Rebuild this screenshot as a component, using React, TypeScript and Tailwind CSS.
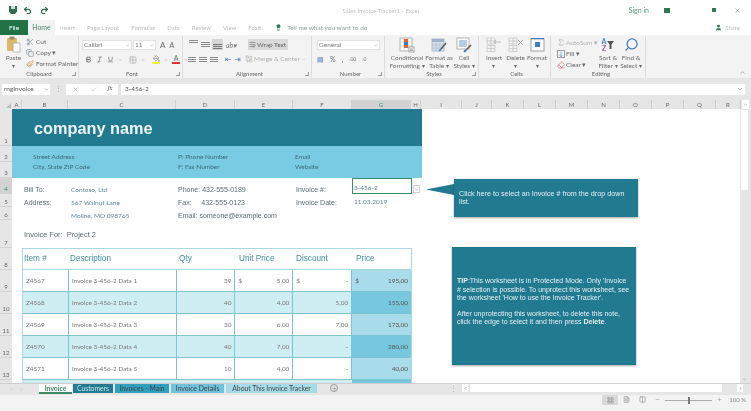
import { ChevronDown, ChevronUp, Undo2, Redo2, Search, Scissors, Copy, Paintbrush, Bold, Italic, Underline, Grid2x2, PaintBucket, Sigma, Eraser, X, Check, Plus, Minus, Lightbulb, User, ChevronLeft, ChevronRight, LayoutGrid, FileText, Columns2, WrapText, Combine } from "lucide-react";

const colLetters = [
  ["A", "w-[10px]"], ["B", "w-[46px]"], ["C", "w-[108px]"], ["D", "w-[59px]"], ["E", "w-[58px]"], ["F", "w-[59px]"], ["G", "w-[59px]"], ["H", "w-[10px]"],
  ["I", "w-[41px]"], ["J", "w-[30px]"], ["K", "w-[32px]"], ["L", "w-[32px]"], ["M", "w-[32px]"], ["N", "w-[32px]"], ["O", "w-[32px]"], ["P", "w-[32px]"], ["Q", "w-[32px]"], ["R", "w-[25px]"],
];

const rowLabels = [
  ["1", "h-[37px]"], ["2", "h-[16px]"], ["3", "h-[16px]"], ["4", "h-[16px]"], ["5", "h-[13px]"], ["6", "h-[13px]"], ["7", "h-[28px]"], ["8", "h-[22px]"],
  ["9", "h-[22px]"], ["10", "h-[22px]"], ["11", "h-[22px]"], ["12", "h-[22px]"], ["13", "h-[22px]"],
];

const items = [
  { id: "Z4567", n: 1, qty: "39", unit: "5,00", disc: "-", price: "195,00", sign: true, band: false },
  { id: "Z4568", n: 2, qty: "40", unit: "4,00", disc: "5,00", price: "155,00", sign: false, band: true },
  { id: "Z4569", n: 3, qty: "30", unit: "6,00", disc: "7,00", price: "173,00", sign: false, band: false },
  { id: "Z4570", n: 4, qty: "40", unit: "7,00", disc: "-", price: "280,00", sign: false, band: true },
  { id: "Z4571", n: 5, qty: "10", unit: "4,00", disc: "-", price: "40,00", sign: false, band: false },
];

function Group({ label, className, launcher = true, children }: { label: string; className: string; launcher?: boolean; children: React.ReactNode }) {
  return (
    <div className={`relative flex h-full shrink-0 flex-col border-r border-[#dcdcdc] ${className}`}>
      <div className="flex min-h-0 flex-1 items-start">{children}</div>
      <div className="pb-[1px] text-center text-[6px] leading-[7px] text-[#666]">{label}</div>
      {launcher ? <div className="absolute bottom-[2px] right-[2px] h-[4px] w-[4px] border-b border-r border-[#999]" /> : null}
    </div>
  );
}

function BigButton({ lines, icon, className = "" }: { lines: string[]; icon: React.ReactNode; className?: string }) {
  return (
    <div className={`flex shrink-0 flex-col items-center whitespace-nowrap text-center text-[6.4px] leading-[8px] text-[#6a6a6a] ${className}`}>
      <div className="flex h-[17px] items-center">{icon}</div>
      <div className="mt-[1px]">{lines.map((l) => <div key={l}>{l}</div>)}</div>
    </div>
  );
}

function ConditionalIcon() {
  return (
    <svg width="16" height="16" viewBox="0 0 16 16" fill="none">
      <rect x="1" y="1" width="12" height="13" fill="#fff" stroke="#a0a0a0" strokeWidth="0.8" />
      <path d="M1 5h12M1 9h12M5 1v13M9 1v13" stroke="#c0c0c0" strokeWidth="0.6" />
      <rect x="5" y="2" width="4" height="3" fill="#e0662f" />
      <rect x="5" y="5" width="4" height="3" fill="#3f7cc0" />
      <rect x="5" y="8" width="4" height="3" fill="#e0662f" />
      <rect x="10" y="10" width="5" height="5" fill="#fff" stroke="#888" strokeWidth="0.7" />
      <path d="M11 12h3M11 13.5h3" stroke="#666" strokeWidth="0.6" />
    </svg>
  );
}

function FormatTableIcon() {
  return (
    <svg width="16" height="16" viewBox="0 0 16 16" fill="none">
      <rect x="1" y="2" width="12" height="12" fill="#d5e0ec" stroke="#a6b2c0" strokeWidth="0.8" />
      <rect x="1" y="2" width="12" height="3" fill="#9fb2c8" />
      <path d="M1 8h12M1 11h12M5 2v12M9 2v12" stroke="#a9b6c6" strokeWidth="0.6" />
      <path d="M15 6l-5 6" stroke="#555" strokeWidth="1.4" />
      <path d="M10 12l-2 2" stroke="#3f7cc0" strokeWidth="1.6" />
    </svg>
  );
}

function CellStylesIcon() {
  return (
    <svg width="16" height="16" viewBox="0 0 16 16" fill="none">
      <rect x="1" y="1" width="12" height="11" fill="#fff" stroke="#a0a0a0" strokeWidth="0.8" />
      <rect x="3" y="3" width="8" height="7" fill="#b7cde2" />
      <path d="M15 8l-4 4" stroke="#555" strokeWidth="1.4" />
      <path d="M11 12l-3 3" stroke="#3f7cc0" strokeWidth="1.8" />
    </svg>
  );
}

function CellsIcon({ mark }: { mark: React.ReactNode }) {
  return (
    <svg width="16" height="15" viewBox="0 0 16 15" fill="none">
      <path d="M1 8.5h8v6H1zM1 11.5h8M5 8.5v6M1 1h8v6H1zM1 4h8M5 1v6" stroke="#c2c2c2" strokeWidth="0.7" />
      {mark}
    </svg>
  );
}

function Ribbon() {
  return (
    <div className="flex h-[43px] shrink-0 bg-[#f3f3f3] pt-[1px]">
      <Group label="Clipboard" className="w-[79px]">
        <BigButton
          className="ml-[5px] w-[17px]"
          lines={["Paste", "▾"]}
          icon={
            <svg width="15" height="17" viewBox="0 0 15 17" fill="none">
              <rect x="1" y="2" width="10" height="13" rx="1" fill="#e0b866" />
              <rect x="3.5" y="0.5" width="5" height="3" fill="#9a8a70" />
              <path d="M7 7h7v9H7z" fill="#fff" stroke="#a0a0a0" strokeWidth="0.7" />
            </svg>
          }
        />
        <div className="ml-[4px] flex flex-col gap-[2px] whitespace-nowrap pt-[1px] text-[6.5px] leading-[9px] text-[#666]">
          <div className="flex items-center gap-[2px]"><Scissors size={8} className="text-[#7d8794]" />Cut</div>
          <div className="flex items-center gap-[2px]"><Copy size={8} className="text-[#7d8794]" />Copy ▾</div>
          <div className="flex items-center gap-[2px]"><Paintbrush size={8} className="text-[#c9913d]" />Format Painter</div>
        </div>
      </Group>
      <Group label="Font" className="w-[104px] pl-[3px]">
        <div className="flex flex-col gap-[5px] pt-[4px]">
          <div className="flex items-center gap-[1px]">
            <div className="flex h-[10px] w-[50px] items-center justify-between border border-[#e2e2e2] bg-white px-[1px] text-[6.5px] text-[#777]">Calibri<ChevronDown size={5} /></div>
            <div className="flex h-[10px] w-[23px] items-center justify-between border border-[#e2e2e2] bg-white px-[1px] text-[6.5px] text-[#777]">11<ChevronDown size={5} /></div>
            <span className="ml-[3px] text-[8px] leading-[8px] text-[#666]">A</span>
            <span className="ml-[3px] text-[7px] leading-[8px] text-[#666]">A</span>
          </div>
          <div className="flex items-center gap-[4px] pl-[3px] text-[#666]">
            <Bold size={7} strokeWidth={3} />
            <Italic size={7} />
            <Underline size={7} />
            <ChevronDown size={4} />
            <Grid2x2 size={8} className="ml-[3px] text-[#aaa]" />
            <ChevronDown size={4} />
            <div className="ml-[3px] flex flex-col items-center">
              <PaintBucket size={7} className="text-[#888]" />
              <div className="h-[2px] w-[8px] bg-[#f5ee3a]" />
            </div>
            <ChevronDown size={4} />
            <div className="flex flex-col items-center">
              <span className="text-[7px] leading-[7px] text-[#666]">A</span>
              <div className="h-[2px] w-[8px] bg-[#e03030]" />
            </div>
            <ChevronDown size={4} />
          </div>
        </div>
      </Group>
      <Group label="Alignment" className="w-[129px] pl-[5px]">
        <div className="flex flex-col gap-[5px] pt-[3px]">
          <div className="flex items-center">
            <div className="flex w-[35px] items-center gap-[1px]">
              <div className="flex h-[11px] w-[11px] flex-col gap-[1px] p-[1px]"><div className="h-px bg-[#8a8a8a]" /><div className="h-px bg-[#8a8a8a]" /></div>
              <div className="flex h-[11px] w-[11px] flex-col justify-center gap-[1px] p-[1px]"><div className="h-px bg-[#8a8a8a]" /><div className="h-px bg-[#8a8a8a]" /><div className="h-px bg-[#8a8a8a]" /></div>
              <div className="flex h-[11px] w-[11px] flex-col justify-end gap-[1px] bg-[#d6d6d6] p-[1px]"><div className="h-px bg-[#777]" /><div className="h-px bg-[#777]" /><div className="h-px bg-[#777]" /></div>
            </div>
            <span className="ml-[3px] w-[15px] text-[7px] italic leading-[8px] text-[#777]">ab▾</span>
            <div className="ml-[7px] flex h-[11px] w-[40px] items-center gap-[1px] whitespace-nowrap bg-[#d9d9d9] px-[1px] text-[6.5px] text-[#666]"><WrapText size={7} />Wrap Text</div>
          </div>
          <div className="flex items-center">
            <div className="flex w-[35px] items-center gap-[3px]">
              {[0, 1, 2].map((k) => (
                <div key={k} className="flex h-[8px] w-[8px] flex-col justify-center gap-[1px]"><div className="h-px bg-[#8a8a8a]" /><div className="h-px bg-[#8a8a8a]" /><div className="h-px bg-[#8a8a8a]" /></div>
              ))}
            </div>
            <span className="flex gap-[2px] pl-[2px] text-[8px] leading-[8px] text-[#4f81bd]"><span>⇤</span><span>⇥</span></span>
            <div className="ml-[4px] flex items-center gap-[1px] whitespace-nowrap text-[6.5px] leading-[8px] text-[#b0b0b0]"><Combine size={8} />Merge &amp; Center <ChevronDown size={5} /></div>
          </div>
        </div>
      </Group>
      <Group label="Number" className="w-[73px] pl-[5px]">
        <div className="flex flex-col gap-[5px] pt-[4px]">
          <div className="flex h-[10px] w-[63px] items-center justify-between border border-[#e2e2e2] bg-white px-[1px] text-[6.5px] text-[#777]">General<ChevronDown size={5} /></div>
          <div className="flex items-center gap-[6px] text-[7px] leading-[8px] text-[#777]">
            <span className="text-[#4f81bd]">▤</span>
            <span>%</span>
            <span>,</span>
            <span className="text-[5px]">.00</span>
            <span className="text-[5px]">.0</span>
          </div>
        </div>
      </Group>
      <Group label="Styles" className="w-[94px] pl-[5px]">
        <BigButton className="w-[34px]" lines={["Conditional", "Formatting ▾"]} icon={<ConditionalIcon />} />
        <BigButton className="w-[30px]" lines={["Format as", "Table ▾"]} icon={<FormatTableIcon />} />
        <BigButton className="w-[20px]" lines={["Cell", "Styles ▾"]} icon={<CellStylesIcon />} />
      </Group>
      <Group label="Cells" className="w-[72px] pl-[4px]" launcher={false}>
        <BigButton className="w-[22px]" lines={["Insert", "▾"]} icon={<CellsIcon mark={<path d="M15 5H8M10 3L8 5l2 2" stroke="#b5b5b5" strokeWidth="0.9" />} />} />
        <BigButton className="w-[21px]" lines={["Delete", "▾"]} icon={<CellsIcon mark={<path d="M10 3l5 5M15 3l-5 5" stroke="#9a9a9a" strokeWidth="0.9" />} />} />
        <BigButton
          className="w-[22px]"
          lines={["Format", "▾"]}
          icon={
            <svg width="15" height="15" viewBox="0 0 15 15" fill="none">
              <rect x="1" y="2" width="13" height="12" fill="#fff" stroke="#a0a0a0" />
              <rect x="5" y="5" width="5" height="5" fill="#3f7cc0" />
              <path d="M1 1.5h13" stroke="#3f7cc0" />
            </svg>
          }
        />
      </Group>
      <Group label="Editing" className="w-[95px] pl-[6px]" launcher={false}>
        <div className="flex w-[41px] shrink-0 flex-col gap-[2px] whitespace-nowrap pt-[2px] text-[6.5px] leading-[9px]">
          <div className="flex items-center gap-[1px] text-[#b0b0b0]"><Sigma size={9} />AutoSum ▾</div>
          <div className="flex items-center gap-[1px] text-[#666]"><span className="flex h-[8px] w-[8px] items-center justify-center border border-[#9a9a9a] text-[6px] text-[#3f7cc0]">↓</span>Fill ▾</div>
          <div className="flex items-center gap-[1px] text-[#666]"><Eraser size={8} className="text-[#d9607a]" />Clear ▾</div>
        </div>
        <BigButton
          className="w-[20px]"
          lines={["Sort &", "Filter ▾"]}
          icon={
            <div className="flex items-center gap-[1px]">
              <span className="text-[7px] font-bold leading-[7px] text-[#3f7cc0]">A<br /><span className="text-[#8a5bc0]">Z</span></span>
              <svg width="7" height="8" viewBox="0 0 7 8"><path d="M0 0h7L4.5 3.5V8h-2V3.5z" fill="#555" /></svg>
            </div>
          }
        />
        <BigButton className="ml-[2px] w-[22px]" lines={["Find &", "Select ▾"]} icon={<Search size={15} className="-scale-x-100 text-[#3f7cc0]" />} />
      </Group>
      <div className="flex flex-1 items-end justify-end pb-[2px] pr-[5px] text-[#888]"><ChevronUp size={7} /></div>
    </div>
  );
}

function FormulaBar() {
  return (
    <div className="flex h-[22px] shrink-0 items-center bg-[#e6e6e6] pl-[2px] pr-[6px] text-[6.5px] text-[#666]">
      <div className="flex h-[11px] w-[48px] items-center justify-between bg-white pl-[2px] pr-[1px] text-[#555]">rngInvoice<ChevronDown size={5} /></div>
      <div className="w-[16px] text-center text-[#aaa]">⋮</div>
      <div className="flex h-[11px] w-[52px] items-center justify-around bg-white text-[#aaa]">
        <X size={7} />
        <Check size={7} />
        <span className="font-serif italic text-[#666]">fx</span>
      </div>
      <div className="ml-[3px] flex h-[11px] flex-1 items-center justify-between bg-white pl-[4px] pr-[2px] text-[#555]">3-456-2<ChevronDown size={6} /></div>
    </div>
  );
}

function ItemRow({ item }: { item: (typeof items)[number] }) {
  const bg = item.band ? "bg-[#cfeef3]" : "bg-white";
  const priceBg = item.band ? "bg-[#77c8de]" : "bg-[#a8dcea]";
  const cell = `flex h-full items-center border-r border-[#7cc4d2] px-[3px] ${bg}`;
  return (
    <div className="flex h-[22px] border-b border-[#7cc4d2] text-[6.4px] text-[#777]">
      <div className={`${cell} w-[46px]`}>{item.id}</div>
      <div className={`${cell} w-[108px]`}>Invoice 3-456-2 Data {item.n}</div>
      <div className={`${cell} w-[59px] justify-end`}>{item.qty}</div>
      <div className={`${cell} w-[58px] justify-between`}><span>{item.sign ? "$" : ""}</span><span>{item.unit}</span></div>
      <div className={`${cell} w-[59px] justify-between`}><span>{item.sign ? "$" : ""}</span><span>{item.disc}</span></div>
      <div className={`flex h-full w-[59px] items-center justify-between px-[3px] text-[#555] ${priceBg}`}><span>{item.sign ? "$" : ""}</span><span>{item.price}</span></div>
    </div>
  );
}

const arial = "[font-family:'Liberation_Sans',sans-serif]";

function Sheet() {
  return (
    <div className="relative min-h-0 flex-1 overflow-hidden bg-white">
      <div className={`h-[37px] w-[410px] bg-[#217a90] pl-[22px] pt-[10px] text-[16.3px] font-bold leading-[18px] text-[#eef6f8] ${arial}`}>
        company name
      </div>
      <div className="flex h-[32px] w-[410px] items-center bg-[#78cbe0] pl-[21px] text-[6.5px] leading-[10px] text-[#3c6c7c]">
        <div className="w-[145px]"><div>Street Address</div><div>City, State ZIP Code</div></div>
        <div className="w-[117px]"><div>P: Phone Number</div><div>F: Fax Number</div></div>
        <div><div>Email</div><div>Website</div></div>
      </div>
      <div className="flex pl-[12px] pt-[5px] text-[6.5px] text-[#5d6b70]">
        <div className={`w-[47px] text-[7px] leading-[13px] ${arial}`}>
          <div>Bill To:</div>
          <div>Address:</div>
        </div>
        <div className="w-[107px] leading-[13px] text-[#5c8b96]">
          <div>Contoso, Ltd</div>
          <div>567 Walnut Lane</div>
          <div>Moline, MO 098765</div>
        </div>
        <div className={`w-[118px] text-[7px] leading-[13px] ${arial}`}>
          <div>Phone: 432-555-0189</div>
          <div>Fax: &nbsp;&nbsp;&nbsp; 432-555-0123</div>
          <div>Email: someone@example.com</div>
        </div>
        <div className={`w-[56px] text-[7px] leading-[13px] ${arial}`}>
          <div>Invoice #:</div>
          <div>Invoice Date:</div>
        </div>
        <div className="text-[#5c8b96]">
          <div className="-mt-[5px] flex h-[16px] w-[60px] items-end border-[1.5px] border-[#3d8a66] pl-[1px] leading-[11px]">3-456-2</div>
          <div className="mt-[1px] pl-[2px] leading-[13px]">11.03.2019</div>
        </div>
      </div>
      <div className={`flex h-[26px] items-center pl-[12px] text-[7.4px] text-[#5d6b70] ${arial}`}>Invoice For:&nbsp;&nbsp;Project 2</div>
      <div className="ml-[10px] w-[390px] border-x border-t border-[#a8d8e2]">
        <div className={`flex h-[21px] items-center border-b border-[#a8d8e2] text-[8.2px] text-[#3f8fa3] ${arial}`}>
          <div className="w-[46px] pl-[1px]">Item #</div>
          <div className="w-[108px] pl-[1px]">Description</div>
          <div className="w-[59px] pl-[2px]">Qty</div>
          <div className="w-[58px] pl-[3px]">Unit Price</div>
          <div className="w-[59px] pl-[2px]">Discount</div>
          <div className="pl-[3px]">Price</div>
        </div>
        {items.map((item) => <ItemRow key={item.id} item={item} />)}
        <div className="flex h-[22px]"><div className="w-[329px] bg-[#cfeef3]" /><div className="flex-1 bg-[#77c8de]" /></div>
      </div>

      {/* dropdown arrow + floating notes */}
      <div className="absolute left-[401px] top-[76px] flex h-[8px] w-[7px] items-center justify-center border border-[#d0d0d0] bg-white text-[#777]"><ChevronDown size={5} /></div>
      <svg className="absolute left-[414px] top-[75px]" width="28" height="11" viewBox="0 0 28 11"><polygon points="0,5.5 28,0 28,11" fill="#217a90" /></svg>
      <div className={`absolute left-[442px] top-[70px] flex h-[38px] w-[184px] flex-col justify-center bg-[#217a90] pl-[5px] pr-[12px] text-[7.2px] leading-[8.5px] text-[#e4f0f3] shadow-[0_1px_2px_rgba(0,0,0,0.35)] ${arial}`}>
        Click here to select an Invoice # from the drop down list.
      </div>
      <div className={`absolute left-[440px] top-[138px] flex h-[118px] w-[184px] flex-col justify-center bg-[#217a90] pb-[8px] pl-[5px] pr-[4px] text-[7px] leading-[8.3px] text-[#e4f0f3] shadow-[0_1px_2px_rgba(0,0,0,0.35)] ${arial}`}>
        <p><b>TIP</b>:This worksheet is in Protected Mode. Only 'Invoice # selection is possible. To unprotect this worksheet, see the worksheet 'How to use the Invoice Tracker'.</p>
        <p className="mt-[8px]">After unprotecting this worksheet, to delete this note, click the edge to select it and then press <b>Delete</b>.</p>
      </div>
    </div>
  );
}

export default function App() {
  const tabs = ["Insert", "Page Layout", "Formulas", "Data", "Review", "View", "Foxit"];
  return (
    <div className="flex h-[411px] w-[751px] flex-col overflow-hidden bg-white blur-[0.4px] [font-family:'Lato',sans-serif]">
      {/* title bar */}
      <div className="flex h-[20px] shrink-0 items-center text-[#2f6b50]">
        <svg className="ml-[9px]" width="8" height="8" viewBox="0 0 8 8"><path d="M0 0h8v5.5L6 8H2L0 5.5z" fill="currentColor" /><rect x="2" y="0" width="4" height="3" fill="#cfe0d8" /></svg>
        <Undo2 size={9} strokeWidth={3} className="ml-[6px]" />
        <Redo2 size={9} strokeWidth={3} className="ml-[8px]" />
        <div className="flex-1 pl-[84px] text-center text-[6px] text-[#c4c4c4]">Sales Invoice Tracker1 - Excel</div>
        <span className="mr-[15px] text-[7px] text-[#4f9a7a]">Sign in</span>
        <span className="mr-[42px] h-[5px] w-[6px] bg-[#2f7a55]" />
        <span className="mr-[18px] h-[4px] w-[4px] bg-[#2f7a55]" />
        <X size={7} className="mr-[10px] text-[#999]" />
      </div>
      {/* tabs */}
      <div className="flex h-[15px] shrink-0 items-center whitespace-nowrap text-[6px] text-[#bbb]">
        <div className="flex h-full w-[28px] items-center justify-center bg-[#217346] text-[6.5px] text-white">File</div>
        <div className="mr-[5px] flex h-full w-[27px] items-center justify-center bg-[#f3f3f3] text-[7px] text-[#4f8a6f]">Home</div>
        {tabs.map((t) => <div key={t} className="mr-[12px]">{t}</div>)}
        <div className="ml-[2px] flex items-center gap-[5px] text-[6.5px] text-[#8aa396]">
          <Lightbulb size={7} className="fill-[#2f7a55] text-[#2f7a55]" />
          Tell me what you want to do
        </div>
        <div className="ml-auto mr-[11px] flex items-center gap-[3px]"><User size={7} className="fill-[#2f7a55] text-[#2f7a55]" />Share</div>
      </div>
      <Ribbon />
      <FormulaBar />
      {/* column headers */}
      <div className="flex h-[9px] shrink-0 bg-[#e6e6e6] text-[6px] leading-[9px] text-[#666]">
        <div className="flex w-[12px] items-end justify-end p-[1px]"><div className="h-0 w-0 border-b-[5px] border-l-[5px] border-b-[#bbb] border-l-transparent" /></div>
        {colLetters.map(([c, w]) => (
          <div key={c} className={`${w} border-r border-[#cfcfcf] text-center ${c === "G" ? "bg-[#d2d2d2] text-[#3d8a66]" : ""}`}>{c}</div>
        ))}
        <div className="ml-[1px] flex w-[7px] items-center justify-center bg-white text-[#777]"><ChevronUp size={5} /></div>
      </div>
      {/* sheet body */}
      <div className="flex min-h-0 flex-1">
        <div className="w-[12px] shrink-0 overflow-hidden bg-[#e6e6e6] text-[6px] leading-[9px] text-[#666]">
          {rowLabels.map(([r, h]) => (
            <div key={r} className={`${h} flex items-end justify-center border-b border-[#d2d2d2] ${r === "4" ? "bg-[#d2d2d2] text-[#3d8a66]" : ""}`}>{r}</div>
          ))}
        </div>
        <Sheet />
        <div className="flex w-[11px] shrink-0 flex-col bg-[#e6e6e6] pl-[1px] pr-[3px] pt-[1px]">
          <div className="h-[80px] bg-white" />
          <div className="mt-auto flex h-[7px] items-center justify-center text-[#777]"><ChevronDown size={5} /></div>
        </div>
      </div>
      {/* sheet tabs */}
      <div className="flex h-[12px] shrink-0 items-start border-t border-[#cfcfcf] bg-[#e6e6e6] text-[6.8px] leading-[9px] text-[#444]">
        <div className="flex h-full w-[39px] items-center gap-[5px] pl-[9px] text-[#bbb]"><ChevronLeft size={5} /><ChevronRight size={5} /></div>
        <div className="h-[10px] w-[33px] border-b-2 border-[#3d8a66] bg-white text-center font-bold text-[#3d8a66]">Invoice</div>
        <div className="ml-[1px] h-[9px] w-[40px] bg-[#217a90] text-center text-[#cde5ea]">Customers</div>
        <div className="ml-[2px] h-[9px] w-[54px] bg-[#2fa0c0] text-center">Invoices - Main</div>
        <div className="ml-[2px] h-[9px] w-[53px] bg-[#6fc3dc] text-center">Invoice Details</div>
        <div className="ml-[2px] h-[9px] w-[91px] bg-[#a5dcea] text-center">About This Invoice Tracker</div>
        <div className="ml-[13px] flex h-[8px] w-[8px] items-center justify-center rounded-full border border-[#999] text-[#777]"><Plus size={5} /></div>
        <div className="ml-[112px] text-[#aaa]">⋮</div>
        <div className="ml-[5px] flex h-[8px] w-[6px] items-center justify-center bg-white"><ChevronLeft size={5} /></div>
        <div className="ml-[2px] h-[8px] w-[252px] bg-white" />
        <div className="ml-[15px] flex h-[8px] w-[6px] items-center justify-center bg-white"><ChevronRight size={5} /></div>
      </div>
      {/* status bar */}
      <div className="flex h-[16px] shrink-0 items-start justify-end gap-[5px] bg-[#f3f3f3] pr-[5px] text-[6px] leading-[10px] text-[#888]">
        <div className="flex h-[10px] w-[16px] items-center justify-center bg-[#d9d9d9]"><LayoutGrid size={7} /></div>
        <FileText size={7} className="mt-[1px]" />
        <Columns2 size={7} className="ml-[4px] mt-[1px]" />
        <Minus size={5} className="ml-[4px] mt-[2px]" />
        <div className="relative mt-[5px] h-px w-[47px] bg-[#aaa]"><div className="absolute left-[23px] top-[-3px] h-[7px] w-[2px] bg-[#777]" /></div>
        <Plus size={5} className="mt-[2px]" />
        <span className="ml-[2px]">100 %</span>
      </div>
    </div>
  );
}
